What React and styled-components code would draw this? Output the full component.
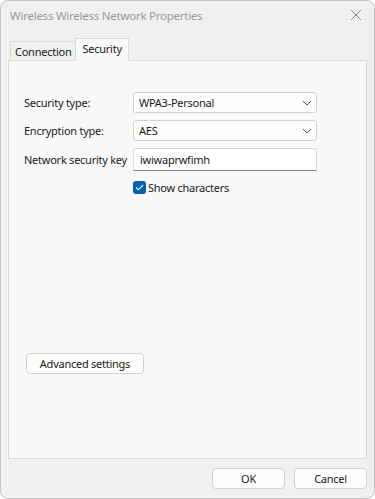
import React from "react";
import styled, { createGlobalStyle } from "styled-components";

const Global = createGlobalStyle`
  html, body { margin: 0; padding: 0; background: #ffffff; }
  body { font-family: "Noto Sans", "Open Sans", sans-serif; font-size: 11px; letter-spacing: -0.25px; color: #1a1a1a; }
  * { box-sizing: border-box; }
`;

const Window = styled.div`
  width: 375px;
  height: 499px;
  background: #f0f0f0;
  border: 1px solid #c4c4c4;
  border-radius: 8px;
  display: flex;
  flex-direction: column;
  overflow: hidden;
`;

const TitleBar = styled.div`
  height: 30px;
  display: flex;
  align-items: center;
  justify-content: space-between;
  padding: 0 9px 2px 9px;
  color: #999999;
  font-size: 11.5px;
  white-space: nowrap;
`;

const CloseBtn = styled.div`
  width: 12px;
  height: 12px;
  display: flex;
  margin-right: 3px;
`;

const Body = styled.div`
  flex: 1;
  display: flex;
  flex-direction: column;
  padding: 6px 7px 0 7px;
`;

const TabRow = styled.div`
  display: flex;
  align-items: flex-end;
  height: 23px;
  padding-left: 2px;
  position: relative;
  z-index: 1;
  white-space: nowrap;
`;

const Tab = styled.div`
  height: ${(p) => (p.$active ? "23px" : "19px")};
  padding: ${(p) => (p.$active ? "0 6px 3px" : "0 4px")};
  display: flex;
  align-items: center;
  border: 1px solid #d9d9d9;
  border-bottom: ${(p) => (p.$active ? "1px solid #f9f9f9" : "none")};
  background: ${(p) => (p.$active ? "#f9f9f9" : "#f0f0f0")};
  margin-left: ${(p) => (p.$active ? "-1px" : "0")};
  color: #1a1a1a;
  margin-bottom: ${(p) => (p.$active ? "-1px" : "0")};
`;

const Panel = styled.div`
  flex: 1;
  background: #f9f9f9;
  border: 1px solid #d9d9d9;
  display: flex;
  flex-direction: column;
  padding: 31px 0 84px 15px;
`;

const Form = styled.div`
  display: grid;
  grid-template-columns: 109px 184px;
  row-gap: 7px;
  align-items: center;
  white-space: nowrap;
`;

const Label = styled.div`
  color: #1a1a1a;
`;

const Combo = styled.div`
  height: 21px;
  border: 1px solid #d3d3d3;
  border-radius: 3px;
  background: #fdfdfd;
  display: flex;
  align-items: center;
  justify-content: space-between;
  padding: 0 4px 0 5px;
`;

const Input = styled.div`
  height: 23px;
  border: 1px solid #dcdcdc;
  border-bottom: 1px solid #868686;
  border-radius: 3px 3px 0 0;
  background: #ffffff;
  display: flex;
  align-items: center;
  padding: 0 6px;
`;

const CheckRow = styled.div`
  grid-column: 2;
  display: flex;
  align-items: center;
  gap: 2px;
  margin-top: 2px;
`;

const CheckBox = styled.div`
  width: 13px;
  height: 13px;
  border-radius: 3px;
  background: #005fb8;
  display: flex;
  align-items: center;
  justify-content: center;
`;

const Spacer = styled.div`
  flex: 1;
`;

const Button = styled.div`
  height: 21px;
  width: ${(p) => p.$w}px;
  border: 1px solid #d0d0d0;
  border-radius: 4px;
  background: #fdfdfd;
  display: flex;
  align-items: center;
  justify-content: center;
  color: #1a1a1a;
  white-space: nowrap;
  margin-left: ${(p) => p.$ml || 0}px;
`;

const Footer = styled.div`
  display: flex;
  justify-content: flex-end;
  gap: 9px;
  padding: 9px 0 9px 0;
`;

const Chevron = () => (
  <svg width="10" height="6" viewBox="0 0 10 6">
    <path d="M1 1 L5 5 L9 1" fill="none" stroke="#555" strokeWidth="1" />
  </svg>
);

export default function App() {
  return (
    <>
      <Global />
      <Window>
        <TitleBar>
          <span>Wireless Wireless Network Properties</span>
          <CloseBtn>
            <svg width="12" height="12" viewBox="0 0 12 12">
              <path d="M1 1 L11 11 M11 1 L1 11" stroke="#8a8a8a" strokeWidth="1" />
            </svg>
          </CloseBtn>
        </TitleBar>
        <Body>
          <TabRow>
            <Tab>Connection</Tab>
            <Tab $active>Security</Tab>
          </TabRow>
          <Panel>
            <Form>
              <Label>Security type:</Label>
              <Combo>
                <span>WPA3-Personal</span>
                <Chevron />
              </Combo>
              <Label>Encryption type:</Label>
              <Combo>
                <span>AES</span>
                <Chevron />
              </Combo>
              <Label>Network security key</Label>
              <Input>iwiwaprwfimh</Input>
              <CheckRow>
                <CheckBox>
                  <svg width="9" height="7" viewBox="0 0 9 7">
                    <path d="M1 3.5 L3.3 5.8 L8 1" fill="none" stroke="#fff" strokeWidth="1.1" />
                  </svg>
                </CheckBox>
                <span>Show characters</span>
              </CheckRow>
            </Form>
            <Spacer />
            <Button $w={118} $ml={2}>Advanced settings</Button>
          </Panel>
          <Footer>
            <Button $w={73}>OK</Button>
            <Button $w={73}>Cancel</Button>
          </Footer>
        </Body>
      </Window>
    </>
  );
}
